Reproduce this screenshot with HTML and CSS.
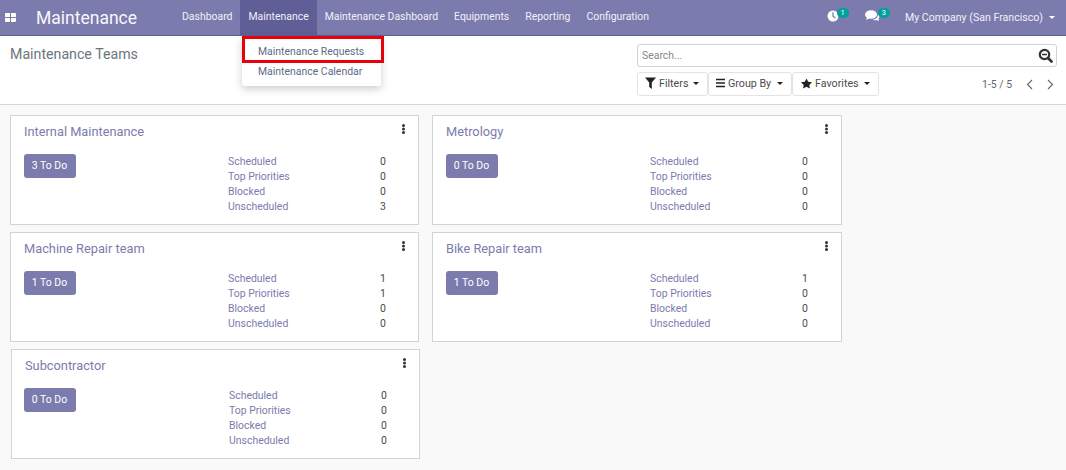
FILE: index.html
```html
<!DOCTYPE html>
<html lang="en">
<head>
    <meta charset="UTF-8">
    <title>Maintenance Teams</title>
    <link rel="stylesheet" href="styles.css">
</head>
<body>
    <header class="navbar">
        <svg class="apps" width="14" height="12" viewBox="0 0 14 12"><path d="M2 1h4v4H1V2a1 1 0 0 1 1-1zM7 1h4a1 1 0 0 1 1 1v3H7zM1 6h5v4H2a1 1 0 0 1-1-1zM7 6h5v3a1 1 0 0 1-1 1H7z" fill="#fff"/></svg>
        <span class="brand">Maintenance</span>
        <nav class="menu">
            <a href="#">Dashboard</a>
            <a href="#" class="open">Maintenance</a>
            <a href="#">Maintenance Dashboard</a>
            <a href="#">Equipments</a>
            <a href="#">Reporting</a>
            <a href="#">Configuration</a>
        </nav>
        <div class="systray">
            <span class="tray-item">
                <svg width="12" height="12" viewBox="0 0 12 12"><circle cx="6" cy="6" r="5.500" fill="#fff"/><path d="M6 2.200v4l2.400 1.800" fill="none" stroke="#7c7bad" stroke-width="1.300"/></svg>
                <span class="badge">1</span>
            </span>
            <span class="tray-item chat">
                <svg width="15" height="12" viewBox="0 0 15 12"><ellipse cx="6" cy="4.500" rx="6" ry="4.300" fill="#fff"/><path d="M2 7 1 10l4-2z" fill="#fff"/><path d="M13 4.500c1.500 1 2 3 .5 4.500l.5 2-2.500-1c-1.500.5-3 .3-4-.5 3 0 5.500-2 5.500-5z" fill="#fff"/></svg>
                <span class="badge">3</span>
            </span>
            <span class="company">My Company (San Francisco)<i class="caret"></i></span>
        </div>
    </header>

    <div class="dropdown">
        <a href="#" class="active">Maintenance Requests</a>
        <a href="#">Maintenance Calendar</a>
    </div>

    <section class="control-panel">
        <h1>Maintenance Teams</h1>
        <div class="controls">
            <div class="search">
                <span>Search...</span>
                <svg width="15" height="15" viewBox="0 0 15 15"><circle cx="6.500" cy="6.500" r="4.700" fill="none" stroke="#333" stroke-width="2.200"/><path d="M4 6.500h5" stroke="#333" stroke-width="1.500"/><path d="m10 10 3.500 3.500" stroke="#333" stroke-width="2.600" stroke-linecap="round"/></svg>
            </div>
            <div class="control-row">
                <div class="filters">
                    <button class="btn-filters">
                        <svg width="11" height="12" viewBox="0 0 11 12"><path d="M0 .5h11L6.800 5.500V12L4.200 10V5.500z" fill="#222"/></svg>
                        Filters<i class="caret dark"></i>
                    </button>
                    <button class="btn-group">
                        <svg width="9" height="10" viewBox="0 0 9 10"><path d="M0 1.500h9M0 5h9M0 8.500h9" stroke="#222" stroke-width="1.400"/></svg>
                        Group By<i class="caret dark"></i>
                    </button>
                    <button class="btn-favorites">
                        <svg width="11" height="11" viewBox="0 0 12 11"><path d="m6 0 1.800 3.700 4.200.5-3 2.900.8 3.900L6 9.100 2.200 11 3 7.100 0 4.200l4.200-.5z" fill="#222"/></svg>
                        Favorites<i class="caret dark"></i>
                    </button>
                </div>
                <div class="pager">
                    <span>1-5 / 5</span>
                    <svg width="7" height="11" viewBox="0 0 7 11"><path d="M6 1 1.500 5.500 6 10" fill="none" stroke="#666" stroke-width="1.100"/></svg>
                    <svg width="7" height="11" viewBox="0 0 7 11"><path d="m1 1 4.500 4.500L1 10" fill="none" stroke="#666" stroke-width="1.100"/></svg>
                </div>
            </div>
        </div>
    </section>

    <main class="kanban">
        <article class="card">
            <h2>Internal Maintenance</h2>
            <i class="dots"></i>
            <div class="card-body">
                <button class="todo">3 To Do</button>
                <dl class="stats">
                    <dt>Scheduled</dt><dd>0</dd>
                    <dt>Top Priorities</dt><dd>0</dd>
                    <dt>Blocked</dt><dd>0</dd>
                    <dt>Unscheduled</dt><dd>3</dd>
                </dl>
            </div>
        </article>
        <article class="card">
            <h2>Metrology</h2>
            <i class="dots"></i>
            <div class="card-body">
                <button class="todo">0 To Do</button>
                <dl class="stats">
                    <dt>Scheduled</dt><dd>0</dd>
                    <dt>Top Priorities</dt><dd>0</dd>
                    <dt>Blocked</dt><dd>0</dd>
                    <dt>Unscheduled</dt><dd>0</dd>
                </dl>
            </div>
        </article>
        <article class="card">
            <h2>Machine Repair team</h2>
            <i class="dots"></i>
            <div class="card-body">
                <button class="todo">1 To Do</button>
                <dl class="stats">
                    <dt>Scheduled</dt><dd>1</dd>
                    <dt>Top Priorities</dt><dd>1</dd>
                    <dt>Blocked</dt><dd>0</dd>
                    <dt>Unscheduled</dt><dd>0</dd>
                </dl>
            </div>
        </article>
        <article class="card">
            <h2>Bike Repair team</h2>
            <i class="dots"></i>
            <div class="card-body">
                <button class="todo">1 To Do</button>
                <dl class="stats">
                    <dt>Scheduled</dt><dd>1</dd>
                    <dt>Top Priorities</dt><dd>0</dd>
                    <dt>Blocked</dt><dd>0</dd>
                    <dt>Unscheduled</dt><dd>0</dd>
                </dl>
            </div>
        </article>
        <article class="card shifted">
            <h2>Subcontractor</h2>
            <i class="dots"></i>
            <div class="card-body">
                <button class="todo">0 To Do</button>
                <dl class="stats">
                    <dt>Scheduled</dt><dd>0</dd>
                    <dt>Top Priorities</dt><dd>0</dd>
                    <dt>Blocked</dt><dd>0</dd>
                    <dt>Unscheduled</dt><dd>0</dd>
                </dl>
            </div>
        </article>
    </main>
</body>
</html>
```

FILE: styles.css
```css
* {
    box-sizing: border-box;
}
body {
    margin: 0;
    height: 470px;
    overflow: hidden;
    background: #f9f9f9;
    color: #4c4c4c;
    font-family: Roboto, "Liberation Sans", sans-serif;
    font-size: 10.45px;
}
a {
    text-decoration: none;
    color: inherit;
}
button {
    font: inherit;
}
.navbar {
    display: flex;
    align-items: center;
    height: 36px;
    background: #7c7bad;
    border-bottom: 1px solid #5f5e97;
    color: #fff;
}
.apps {
    margin-left: 4px;
}
.brand {
    margin-left: 18px;
    width: 138px;
    font-size: 17.5px;
    opacity: .95;
}
.menu {
    display: flex;
    height: 35px;
}
.menu a {
    padding: 0 8px;
    line-height: 33px;
    color: #f1f1f7;
}
.menu a.open {
    background: #5f5e97;
}
.systray {
    display: flex;
    align-items: center;
    margin-left: auto;
}
.tray-item {
    display: flex;
    margin: 0 16px 5px 0;
}
.tray-item.chat {
    margin-right: 15px;
}
.tray-item svg {
    margin-top: 2px;
}
.badge {
    margin-left: -2px;
    padding: 0 4px;
    height: 10px;
    border-radius: 5px;
    background: #00a09d;
    font-size: 7.5px;
    line-height: 10px;
}
.company {
    margin-right: 11px;
    color: #f1f1f7;
    font-size: 10.6px;
}
.caret {
    display: inline-block;
    margin-left: 6px;
    vertical-align: 2px;
    border: 3.5px solid transparent;
    border-top-color: #fff;
    border-bottom: 0;
}
.caret.dark {
    border-top-color: #222;
    margin-left: auto;
}
.dropdown {
    position: absolute;
    left: 242px;
    top: 36px;
    z-index: 2;
    width: 139px;
    height: 50px;
    padding-top: 6px;
    background: #fff;
    border-radius: 0 0 3px 3px;
    box-shadow: 0 3px 8px rgba(0, 0, 0, .2);
    color: #5d6b85;
}
.dropdown a {
    display: block;
    padding-left: 16px;
    height: 20px;
    line-height: 20px;
}
.dropdown a.active {
    position: relative;
}
.dropdown a.active::after {
    content: "";
    box-sizing: border-box;
    position: absolute;
    left: 0;
    top: -6px;
    width: 142px;
    height: 27px;
    border: 3px solid #e8000b;
}
.control-panel {
    display: flex;
    justify-content: space-between;
    height: 69px;
    padding: 8px 15px 0 10px;
    background: #fff;
    border-bottom: 1px solid #d6d6d6;
}
h1 {
    margin: 2px 0 0;
    font-size: 14.2px;
    font-weight: 400;
    color: #6c757d;
}
.controls {
    width: 420px;
    margin-right: -6px;
}
.search {
    display: flex;
    justify-content: space-between;
    align-items: center;
    height: 23px;
    padding: 0 3px 0 4px;
    border: 1px solid #ced4da;
    border-radius: 3px;
    color: #888;
}
.control-row {
    display: flex;
    justify-content: space-between;
    align-items: center;
    margin-top: 5px;
}
.filters {
    display: flex;
}
.filters button {
    display: flex;
    align-items: center;
    gap: 3px;
    height: 24px;
    padding: 0 8px 2px 7px;
    background: #fff;
    border: 1px solid #e3e3e3;
    border-radius: 3px;
    color: #4c4c4c;
    font-size: 10.7px;
}
.filters .btn-filters {
    width: 71px;
}
.filters .btn-group {
    width: 84px;
}
.filters .btn-favorites {
    width: 87px;
    padding-left: 8px;
}
.pager {
    display: flex;
    align-items: center;
    gap: 14px;
    margin: 1px 3px 0 0;
    color: #666;
}
.kanban {
    display: grid;
    grid-template-columns: 409px 410px;
    grid-auto-rows: 110px;
    column-gap: 13px;
    row-gap: 7px;
    padding: 10px 0 0 10px;
}
.card {
    position: relative;
    padding: 8px 13px;
    background: #fff;
    border: 1px solid #ced4da;
}
.card.shifted {
    margin: 0 -1px 0 1px;
}
.card.shifted .todo {
    margin-left: -1px;
    margin-right: 1px;
}
h2 {
    margin: 0;
    font-size: 12.8px;
    line-height: 15px;
    font-weight: 400;
    color: #7c7bad;
}
.dots {
    position: absolute;
    right: 13px;
    top: 8px;
    width: 3px;
    height: 3px;
    border-radius: 50%;
    background: #333;
    box-shadow: 0 3.500px #333, 0 7px #333;
}
.card-body {
    display: flex;
    margin-top: 15px;
}
.todo {
    width: 52px;
    height: 24px;
    padding: 0 1px 2px 0;
    background: #7c7bad;
    border: 0;
    border-radius: 3px;
    color: #fff;
}
.stats {
    display: grid;
    grid-template-columns: 152px 20px;
    grid-auto-rows: 15px;
    margin: 0 0 0 152px;
    line-height: 15px;
}
.stats dt {
    color: #7c7bad;
}
.stats dd {
    margin: 0;
    color: #4c4c4c;
}
```
